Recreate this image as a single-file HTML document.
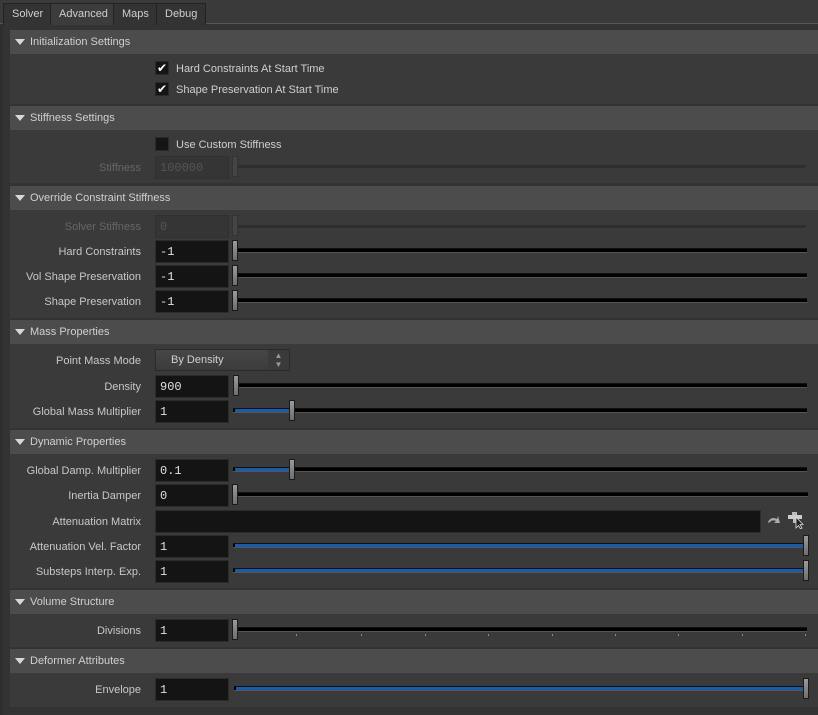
<!DOCTYPE html>
<html><head><style>
*{margin:0;padding:0;box-sizing:border-box}
body{width:818px;height:715px;background:#333;font-family:"Liberation Sans","DejaVu Sans",sans-serif;font-size:11px;color:#cfcfcf;position:relative;overflow:hidden}
.a{position:absolute}
.tabbar{left:0;top:0;width:818px;height:24px;background:#3a3a3a;border-bottom:1px solid #585858}
.tab{top:3px;height:22px;background:#333;border:1px solid #222;border-bottom:none;line-height:21px;padding:0 8px;color:#cfcfcf}
.tab.on{background:#3c3c3c}
.hdr{left:10px;width:808px;height:24px;background:#4c4c4c;line-height:25px;padding-left:20px;color:#d0d0d0}
.hdr:before{content:"";position:absolute;left:5px;top:9px;border-left:5px solid transparent;border-right:5px solid transparent;border-top:6px solid #d8d8d8}
.cnt{left:10px;width:808px;background:#3a3a3a}
.lbl{right:677px;text-align:right;white-space:nowrap;line-height:16px;color:#c8c8c8}
.fld{left:155px;width:74px;height:23px;background:#141414;border:1px solid #2b2b2b;font-family:"Liberation Mono","DejaVu Sans Mono",monospace;font-size:12px;color:#e0e0e0;line-height:22px;padding-left:4px}
.dis{background:#353535;color:#555;border-color:#303030}
.trk{height:5px;background:#000;border-top:1px solid #111;border-bottom:1px solid #555}
.blue{height:3px;background:#1b5aa8}
.hnd{width:6px;height:21px;background:linear-gradient(#9a9a9a,#6e6e6e);border:1px solid #1a1a1a}
.cb{left:155px;width:14px;height:14px;background:#151515;border:1px solid #2a2a2a;color:#fff;font-size:12px;line-height:12px;text-align:center}
.t{line-height:16px}
</style></head><body>
<div class="a tabbar"></div>
<div class="a tab" style="left:3px">Solver</div>
<div class="a tab on" style="left:50px">Advanced</div>
<div class="a tab" style="left:113px">Maps</div>
<div class="a tab" style="left:156px">Debug</div>
<div class="a" style="left:0;top:25px;width:3px;height:690px;background:#2e2e2e"></div>

<div class="a hdr" style="top:30px">Initialization Settings</div>
<div class="a cnt" style="top:54px;height:50px"></div>
<div class="a cb" style="top:61px">✔</div><div class="a t" style="left:176px;top:61px">Hard Constraints At Start Time</div>
<div class="a cb" style="top:82px">✔</div><div class="a t" style="left:176px;top:82px">Shape Preservation At Start Time</div>

<div class="a hdr" style="top:106px">Stiffness Settings</div>
<div class="a cnt" style="top:130px;height:53px"></div>
<div class="a cb" style="top:137px"></div><div class="a t" style="left:176px;top:137px">Use Custom Stiffness</div>
<div class="a lbl" style="top:160px;color:#666">Stiffness</div>
<div class="a fld dis" style="top:156px">100000</div>
<div class="a" style="left:237px;top:165px;width:569px;height:3px;background:#2e2e2e"></div>
<div class="a hnd" style="left:232px;top:156px;background:#444;border-color:#333"></div>

<div class="a hdr" style="top:186px">Override Constraint Stiffness</div>
<div class="a cnt" style="top:210px;height:108px"></div>
<div class="a lbl" style="top:219px;color:#666">Solver Stiffness</div>
<div class="a fld dis" style="top:215px">0</div>
<div class="a" style="left:237px;top:225px;width:569px;height:3px;background:#2e2e2e"></div>
<div class="a hnd" style="left:232px;top:215px;background:#444;border-color:#333"></div>

<div class="a lbl" style="top:244px">Hard Constraints</div>
<div class="a fld" style="top:240px">-1</div>
<div class="a trk" style="left:236px;top:248px;width:571px"></div>
<div class="a hnd" style="left:232px;top:240px"></div>

<div class="a lbl" style="top:269px">Vol Shape Preservation</div>
<div class="a fld" style="top:265px">-1</div>
<div class="a trk" style="left:236px;top:273px;width:571px"></div>
<div class="a hnd" style="left:232px;top:265px"></div>

<div class="a lbl" style="top:294px">Shape Preservation</div>
<div class="a fld" style="top:290px">-1</div>
<div class="a trk" style="left:236px;top:298px;width:571px"></div>
<div class="a hnd" style="left:232px;top:290px"></div>

<div class="a hdr" style="top:320px">Mass Properties</div>
<div class="a cnt" style="top:344px;height:84px"></div>
<div class="a lbl" style="top:353px">Point Mass Mode</div>
<div class="a" style="left:155px;top:349px;width:135px;height:22px;background:linear-gradient(#464646,#3c3c3c);border:1px solid #2a2a2a;line-height:21px;padding-left:15px;color:#d0d0d0">By Density<div class="a" style="right:0;top:0;width:21px;height:20px;background:#3a3a3a;font-size:8px;line-height:9px;text-align:center;padding-top:1px;color:#999">▲<br>▼</div></div>
<div class="a lbl" style="top:379px">Density</div>
<div class="a fld" style="top:375px">900</div>
<div class="a trk" style="left:237px;top:383px;width:570px"></div>
<div class="a hnd" style="left:233px;top:375px"></div>
<div class="a lbl" style="top:404px">Global Mass Multiplier</div>
<div class="a fld" style="top:400px">1</div>
<div class="a trk" style="left:233px;top:408px;width:574px"></div>
<div class="a blue" style="left:235px;top:409px;width:55px"></div>
<div class="a hnd" style="left:289px;top:400px"></div>

<div class="a hdr" style="top:430px">Dynamic Properties</div>
<div class="a cnt" style="top:454px;height:134px"></div>
<div class="a lbl" style="top:463px">Global Damp. Multiplier</div>
<div class="a fld" style="top:459px">0.1</div>
<div class="a trk" style="left:233px;top:467px;width:574px"></div>
<div class="a blue" style="left:235px;top:468px;width:55px"></div>
<div class="a hnd" style="left:289px;top:459px"></div>
<div class="a lbl" style="top:488px">Inertia Damper</div>
<div class="a fld" style="top:484px">0</div>
<div class="a trk" style="left:236px;top:492px;width:572px"></div>
<div class="a hnd" style="left:232px;top:484px"></div>
<div class="a lbl" style="top:514px">Attenuation Matrix</div>
<div class="a fld" style="top:510px;width:606px"></div>
<svg class="a" style="left:766px;top:513px" width="16" height="14" viewBox="0 0 16 14"><path d="M2 9 Q5 3 11 6 L12 3 L14 10 L8 10 L10 8 Q6 6 3 10Z" fill="#aaa"/></svg>
<svg class="a" style="left:787px;top:511px" width="20" height="18" viewBox="0 0 20 18"><rect x="5" y="1" width="5" height="3" fill="#bbb"/><rect x="1" y="4" width="14" height="4" fill="#ccc"/><rect x="6" y="8" width="3" height="4" fill="#bbb"/><path d="M9 6 L9 17 L11.5 14.5 L13.5 18 L15 17 L13 13.5 L16 13.5Z" fill="#222" stroke="#ddd" stroke-width="0.8"/></svg>
<div class="a lbl" style="top:539px">Attenuation Vel. Factor</div>
<div class="a fld" style="top:535px">1</div>
<div class="a trk" style="left:233px;top:543px;width:574px"></div>
<div class="a blue" style="left:235px;top:544px;width:570px"></div>
<div class="a hnd" style="left:803px;top:535px"></div>
<div class="a lbl" style="top:564px">Substeps Interp. Exp.</div>
<div class="a fld" style="top:560px">1</div>
<div class="a trk" style="left:233px;top:568px;width:574px"></div>
<div class="a blue" style="left:235px;top:569px;width:570px"></div>
<div class="a hnd" style="left:803px;top:560px"></div>

<div class="a hdr" style="top:590px">Volume Structure</div>
<div class="a cnt" style="top:614px;height:33px"></div>
<div class="a lbl" style="top:623px">Divisions</div>
<div class="a fld" style="top:619px">1</div>
<div class="a trk" style="left:236px;top:627px;width:571px"></div>
<div class="a hnd" style="left:232px;top:619px"></div>
<div class="a" style="left:296px;top:634px;width:1px;height:2px;background:#888"></div>
<div class="a" style="left:361px;top:634px;width:1px;height:2px;background:#888"></div>
<div class="a" style="left:425px;top:634px;width:1px;height:2px;background:#888"></div>
<div class="a" style="left:488px;top:634px;width:1px;height:2px;background:#888"></div>
<div class="a" style="left:552px;top:634px;width:1px;height:2px;background:#888"></div>
<div class="a" style="left:615px;top:634px;width:1px;height:2px;background:#888"></div>
<div class="a" style="left:678px;top:634px;width:1px;height:2px;background:#888"></div>
<div class="a" style="left:742px;top:634px;width:1px;height:2px;background:#888"></div>
<div class="a" style="left:805px;top:634px;width:1px;height:2px;background:#888"></div>

<div class="a hdr" style="top:649px">Deformer Attributes</div>
<div class="a cnt" style="top:673px;height:34px"></div>
<div class="a lbl" style="top:682px">Envelope</div>
<div class="a fld" style="top:678px">1</div>
<div class="a trk" style="left:234px;top:686px;width:573px"></div>
<div class="a blue" style="left:236px;top:687px;width:569px"></div>
<div class="a hnd" style="left:803px;top:678px"></div>
</body></html>
